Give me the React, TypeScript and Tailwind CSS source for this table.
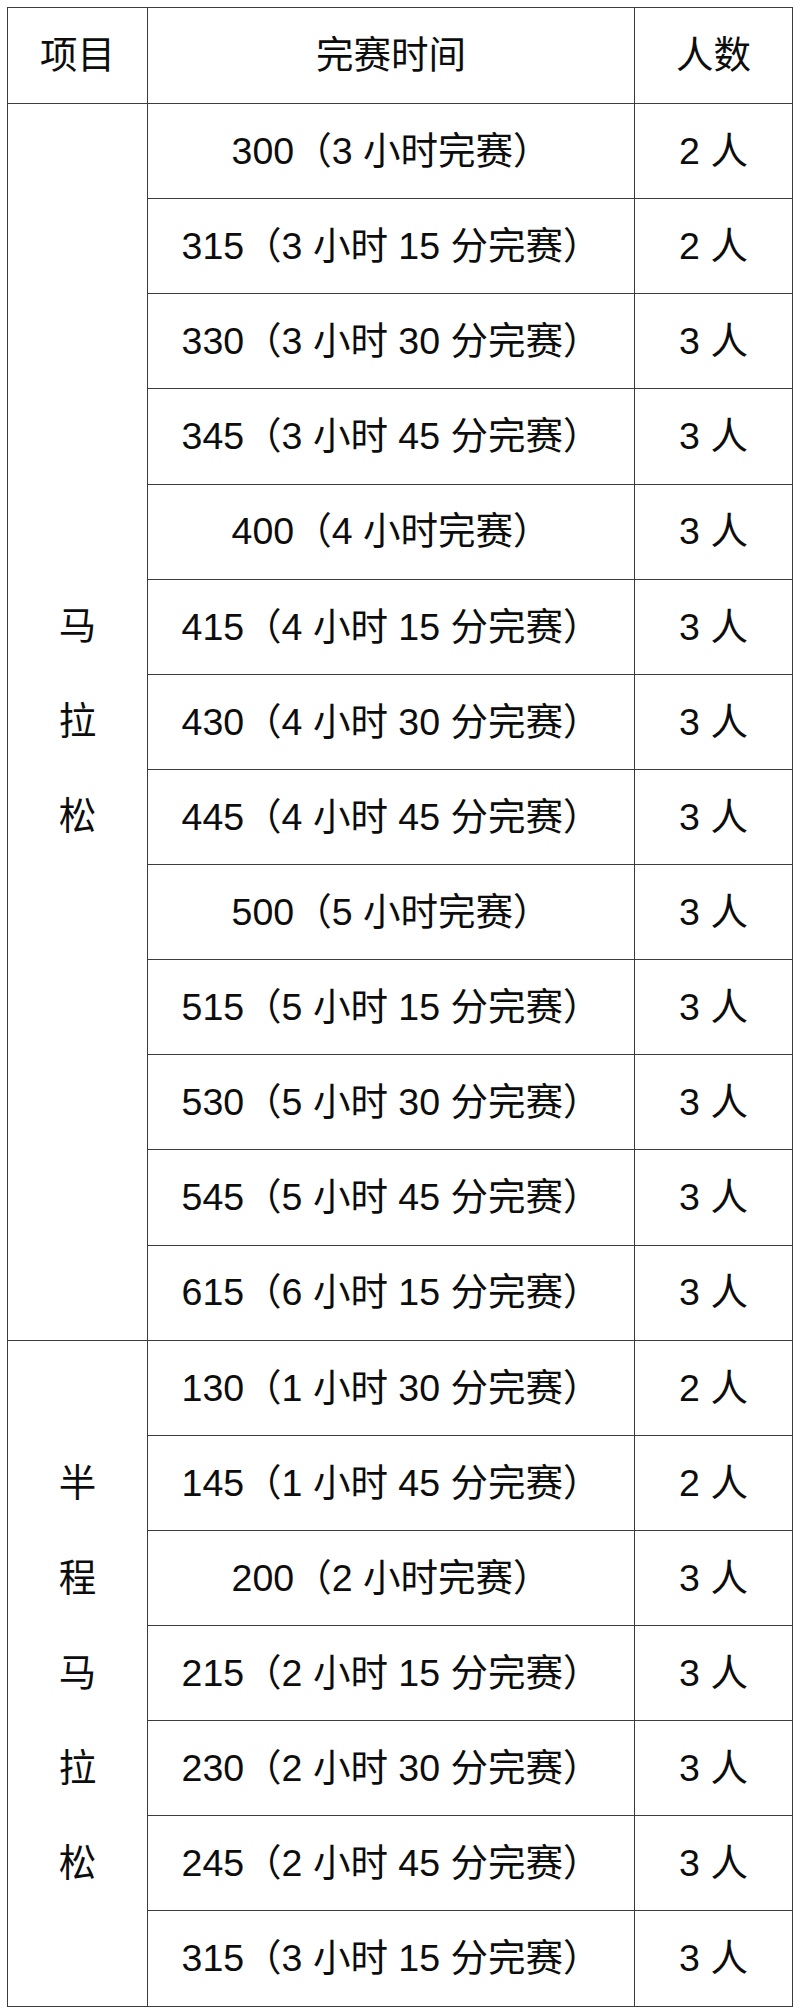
const marathon: [string, string][] = [
  ["300（3 小时完赛）", "2 人"],
  ["315（3 小时 15 分完赛）", "2 人"],
  ["330（3 小时 30 分完赛）", "3 人"],
  ["345（3 小时 45 分完赛）", "3 人"],
  ["400（4 小时完赛）", "3 人"],
  ["415（4 小时 15 分完赛）", "3 人"],
  ["430（4 小时 30 分完赛）", "3 人"],
  ["445（4 小时 45 分完赛）", "3 人"],
  ["500（5 小时完赛）", "3 人"],
  ["515（5 小时 15 分完赛）", "3 人"],
  ["530（5 小时 30 分完赛）", "3 人"],
  ["545（5 小时 45 分完赛）", "3 人"],
  ["615（6 小时 15 分完赛）", "3 人"],
]

const half: [string, string][] = [
  ["130（1 小时 30 分完赛）", "2 人"],
  ["145（1 小时 45 分完赛）", "2 人"],
  ["200（2 小时完赛）", "3 人"],
  ["215（2 小时 15 分完赛）", "3 人"],
  ["230（2 小时 30 分完赛）", "3 人"],
  ["245（2 小时 45 分完赛）", "3 人"],
  ["315（3 小时 15 分完赛）", "3 人"],
]

const cell = "border border-[#3c3c3c] text-center align-middle p-0"

function Group({ label, rows }: { label: string; rows: [string, string][] }) {
  return (
    <>
      {rows.map(([time, count], i) => (
        <tr key={time + i} className="h-[95.14px]">
          {i === 0 && (
            <td rowSpan={rows.length} className={cell}>
              <div className="flex flex-col items-center leading-[95px]">
                {label.split("").map((ch, j) => (
                  <span key={j}>{ch}</span>
                ))}
              </div>
            </td>
          )}
          <td className={cell}>{time}</td>
          <td className={cell}>{count}</td>
        </tr>
      ))}
    </>
  )
}

export default function App() {
  return (
    <div className="bg-white w-[800px] min-h-[2014px] pt-[7px] pl-[7px]">
      <table
        className="border-collapse w-[785px] table-fixed text-[37.5px] text-[#0d0d0d]"
        style={{ fontFamily: '"Liberation Sans", "Noto Sans CJK SC", sans-serif' }}
      >
        <colgroup>
          <col className="w-[140px]" />
          <col className="w-[487px]" />
          <col className="w-[158px]" />
        </colgroup>
        <tbody>
          <tr className="h-[96px]">
            <td className={cell}>项目</td>
            <td className={cell}>完赛时间</td>
            <td className={cell}>人数</td>
          </tr>
          <Group label="马拉松" rows={marathon} />
          <Group label="半程马拉松" rows={half} />
        </tbody>
      </table>
    </div>
  )
}
